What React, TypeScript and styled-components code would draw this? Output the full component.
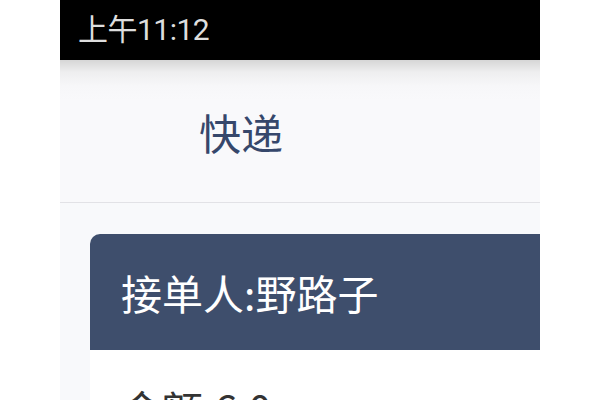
import styled, { createGlobalStyle } from "styled-components";

const GlobalStyle = createGlobalStyle`
  html, body {
    margin: 0;
    padding: 0;
    background: #ffffff;
    font-family: "Noto Sans CJK SC", "Noto Sans", sans-serif;
  }
`;

const Screen = styled.div`
  width: 480px;
  height: 400px;
  margin-left: 60px;
  overflow: hidden;
  background: #f8f9fb;
`;

const StatusBar = styled.div`
  height: 60px;
  background: #000;
  display: flex;
  align-items: center;
  padding-left: 18px;
  color: #dedede;
  font-family: Roboto, "Noto Sans CJK SC", sans-serif;
  font-size: 30px;
  line-height: 1;
  letter-spacing: -0.5px;
`;

const NavBar = styled.div`
  height: 142px;
  display: flex;
  align-items: center;
  padding-left: 139px;
  background: linear-gradient(#d6d6d6 0px, #eeeeef 12px, #f7f7f9 26px, #f9f9fb 40px);
  border-bottom: 1px solid #e2e2e6;
`;

const NavTitle = styled.span`
  font-size: 42px;
  color: #36476b;
  line-height: 1;
  margin-top: 2px;
`;

const Content = styled.div`
  padding: 31px 0 0 30px;
`;

const Card = styled.div`
  width: 480px;
  background: #fff;
  border-radius: 10px 0 0 0;
  overflow: hidden;
`;

const CardHead = styled.div`
  height: 116px;
  display: flex;
  align-items: center;
  padding-left: 31px;
  background: #3e4e6c;
  color: #fff;
  font-size: 41px;
  line-height: 1;
`;

const CardBody = styled.div`
  padding: 38px 31px;
  color: #333;
  font-size: 41px;
  line-height: 1;
`;

export default function App() {
  return (
    <>
      <GlobalStyle />
      <Screen>
        <StatusBar>上午11:12</StatusBar>
        <NavBar>
          <NavTitle>快递</NavTitle>
        </NavBar>
        <Content>
          <Card>
            <CardHead>接单人:野路子</CardHead>
            <CardBody>金额:6.0</CardBody>
          </Card>
        </Content>
      </Screen>
    </>
  );
}
